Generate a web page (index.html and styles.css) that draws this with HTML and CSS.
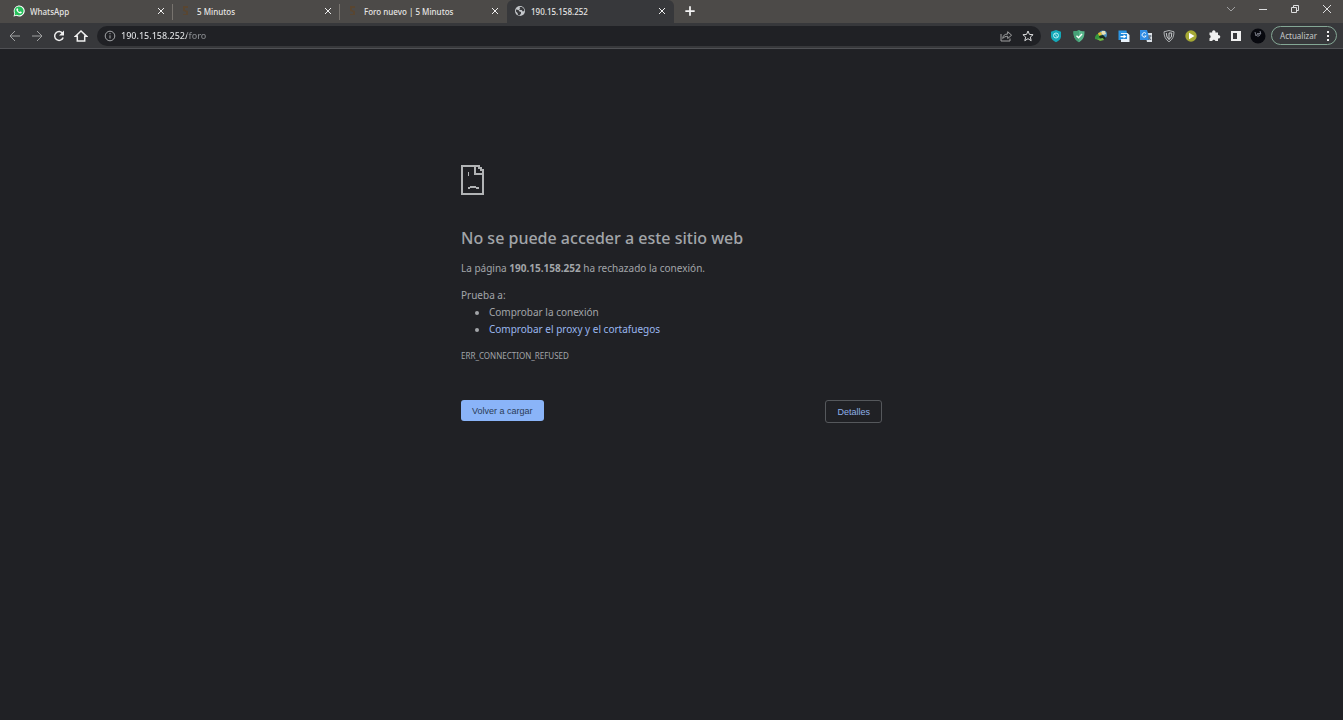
FILE: index.html
```html
<!DOCTYPE html>
<html lang="es">
<head>
<meta charset="utf-8">
<title>190.15.158.252</title>
<link rel="stylesheet" href="styles.css">
</head>
<body>
<header class="browser">
  <div class="tabstrip">
    <nav class="tabs" aria-label="Pestañas">
      <div class="tab">
        <svg class="favicon" viewBox="0 0 24 24"><path fill="#fff" d="M1 23l1.700-6A11 11 0 1 1 7 21.500z"/><path fill="#25c05a" d="M3.200 20.800l1.200-4.300a9 9 0 1 1 3.300 3.200z"/><path fill="#fff" d="M9 6.500c.6 0 1.500 2.200 1.500 2.700s-1 1.200-.8 1.600c.8 1.500 2 2.600 3.700 3.300.5.200 1.100-1.200 1.600-1.100.6.100 2.600 1 2.600 1.600 0 1.600-1.500 2.400-2.900 2.300-3.800-.5-7.600-4-8-7.300C6.600 8 7.800 6.500 9 6.500z"/></svg>
        <span class="tab-title">WhatsApp</span>
        <button class="tab-close" aria-label="Cerrar"><svg viewBox="0 0 10 10"><path d="M2 2l6 6M8 2l-6 6"/></svg></button>
      </div>
      <div class="tab">
        <svg class="favicon" viewBox="0 0 12 12"><path fill="#594631" d="M3 1h5v2H5v2l3 1v4H3V9h3V7L3 6z"/></svg>
        <span class="tab-title">5 Minutos</span>
        <button class="tab-close" aria-label="Cerrar"><svg viewBox="0 0 10 10"><path d="M2 2l6 6M8 2l-6 6"/></svg></button>
      </div>
      <div class="tab">
        <svg class="favicon" viewBox="0 0 12 12"><path fill="#594631" d="M3 1h5v2H5v2l3 1v4H3V9h3V7L3 6z"/></svg>
        <span class="tab-title">Foro nuevo | 5 Minutos</span>
        <button class="tab-close" aria-label="Cerrar"><svg viewBox="0 0 10 10"><path d="M2 2l6 6M8 2l-6 6"/></svg></button>
      </div>
      <div class="tab tab-active">
        <svg class="favicon" viewBox="0 0 24 24"><circle cx="12" cy="12" r="10" fill="#c4c7cb"/><path fill="#393a3d" d="M4 9l5 1 2 3 3 1v3l-3 4-3-1-1-4-3-3zM11 4l5 0 4 4 .5 4-3 1-2-3-4 0-1-2 2-1z"/></svg>
        <span class="tab-title">190.15.158.252</span>
        <button class="tab-close" aria-label="Cerrar"><svg viewBox="0 0 10 10"><path d="M2 2l6 6M8 2l-6 6"/></svg></button>
      </div>
    </nav>
    <button class="new-tab" aria-label="Nueva pestaña"><svg viewBox="0 0 12 12"><path d="M6 2v8M2 6h8"/></svg></button>
    <div class="window-controls">
      <button aria-label="Buscar pestañas"><svg class="dim" viewBox="0 0 12 12"><path d="M2 4l4 4 4-4"/></svg></button>
      <button aria-label="Minimizar"><svg viewBox="0 0 12 12"><path d="M2 6.500h8"/></svg></button>
      <button aria-label="Restaurar"><svg viewBox="0 0 12 12"><path d="M2.500 4.500h5v5h-5zM4.500 4V2.500h5v5H8"/></svg></button>
      <button aria-label="Cerrar ventana"><svg viewBox="0 0 12 12"><path d="M2 2l8 8M10 2l-8 8"/></svg></button>
    </div>
  </div>
  <div class="toolbar">
    <div class="nav-buttons">
      <button aria-label="Atrás"><svg class="dim" viewBox="0 0 14 14"><path d="M12 7H2.500M7 2L2 7l5 5"/></svg></button>
      <button aria-label="Adelante"><svg class="dim" viewBox="0 0 14 14"><path d="M2 7h9.500M7 2l5 5-5 5"/></svg></button>
      <button aria-label="Recargar"><svg class="strong" viewBox="0 0 14 14"><path d="M10.700 4.500A4.400 4.400 0 1 0 11.200 8.500"/><path class="solid" d="M12 1.500v5H7z"/></svg></button>
      <button aria-label="Inicio"><svg class="strong" viewBox="0 0 14 14"><path d="M1.500 7.200L7 2l5.500 5.200H10.700V12H3.300V7.200z"/></svg></button>
    </div>
    <div class="omnibox">
      <svg class="info" viewBox="0 0 14 14"><circle cx="7" cy="7" r="4.800"/><path d="M7 6.300v3.200M7 4v1.200"/></svg>
      <input class="address" type="text" value="190.15.158.252/foro" aria-label="Dirección" spellcheck="false">
      <button aria-label="Compartir"><svg class="dim" viewBox="0 0 14 14"><path d="M2 5v7h9v-2.500M3.700 9.500c.3-3 2-4.500 5-4.500V2.700L12.600 6.200 8.700 9.500V7.300C6.500 7.300 5 8 3.700 9.500z"/></svg></button>
      <button aria-label="Añadir a marcadores"><svg viewBox="0 0 14 14"><path d="M7 2l1.400 3.400 3.700.3-2.800 2.400.9 3.600L7 9.700l-3.200 2 .9-3.600-2.800-2.400 3.700-.3z"/></svg></button>
    </div>
    <div class="extensions">
      <button aria-label="Escudo"><svg viewBox="0 0 14 14"><path fill="#14a8b8" stroke="none" d="M7 1l5 1.700v4.500c0 2.800-2 4.600-5 6-3-1.400-5-3.200-5-6V2.700z"/><circle cx="7" cy="6.500" r="2.500" stroke="#b4eef2"/><path stroke="#b4eef2" d="M5.500 5l3 3"/></svg></button>
      <button aria-label="Protección"><svg viewBox="0 0 14 14"><path fill="#58b58a" stroke="none" d="M7 1c2 1.200 3.500 1.400 5.500 1.300C12.600 8 11 11 7 13.300 3 11 1.400 8 1.500 2.300 3.500 2.400 5 2.200 7 1z"/><path fill="#46a077" stroke="none" d="M7 1C5 2.200 3.500 2.400 1.500 2.300 1.400 8 3 11 7 13.300z"/><path stroke="#fff" stroke-width="1.400" d="M4.500 6.700l2 2L10 5"/></svg></button>
      <button aria-label="Gestor de descargas"><svg viewBox="0 0 14 14"><g stroke="none"><circle cx="9" cy="5.500" r="4" fill="#4a8fbd"/><path fill="#e8e3b8" d="M8 2l3 0 1 3-3 1-2-2z"/><path fill="#35963d" d="M1 8c1-3 3-4 6-3l1 3-3 3-4-1z"/><path fill="#e4bf37" d="M4 4l3-1 1 3-3 1z"/><path fill="#172c1b" d="M5 7l4-1 3 3-3 2-3-1z"/><path fill="#6fb544" d="M3 10l6-1 1 2-4 1z"/></g></svg></button>
      <button aria-label="Transferir"><svg viewBox="0 0 14 14"><g stroke="none"><path fill="#2d96e4" d="M1.500 1.500h8L11 11H1.500z"/><path fill="#e9f2fa" d="M4 4h6.500l2 2v7H4z"/><path fill="#2389d9" d="M3 5h7v5H3z"/><path fill="#fff" d="M3.500 7h3V5.500L9.500 7.500l-3 2V8.300h-3z"/></g></svg></button>
      <button aria-label="Traductor"><svg viewBox="0 0 14 14"><g stroke="none"><path fill="#dde2e7" d="M6 4h7v9H8z"/><path fill="#318de5" d="M1 1h7l3 10H1z"/></g><path stroke="#eef5ff" d="M7 4.500A2.200 2.200 0 1 0 7.200 7H5.500"/><path stroke="#5c6876" d="M9 7h3.500M11 6v1c0 2-1 3-2 3.500M9.700 8l2.300 3"/></svg></button>
      <button aria-label="Privacidad"><svg viewBox="0 0 14 14"><path stroke="#aeb1b3" d="M7 1.500l5 1.300c0 4.700-1.500 7.700-5 10-3.500-2.300-5-5.300-5-10z"/><path stroke="#c8cbcd" d="M4.300 4l.7 4 2 2.500M7 4v6.500L9.300 8l.5-4H7"/></svg></button>
      <button aria-label="Reproductor"><svg viewBox="0 0 14 14"><circle cx="7" cy="7" r="5.700" fill="#a5a834" stroke="none"/><path fill="#fff" stroke="none" d="M5 3.700L10.500 7 5 10.300z"/></svg></button>
      <button aria-label="Extensiones"><svg viewBox="0 0 14 14"><path class="solid" d="M2.500 3.500h2.700a1.700 1.700 0 1 1 3.200 0H11v2.700a1.700 1.700 0 1 1 0 3.200V12H8.400a1.700 1.700 0 0 0-3.200 0H2.500V9.300a1.700 1.700 0 0 0 0-3.200z"/></svg></button>
      <button aria-label="Panel lateral"><svg viewBox="0 0 14 14"><path class="solid" fill-rule="evenodd" d="M2 2h10v10H2zM4 4v6h4V4z"/></svg></button>
    </div>
    <button class="avatar" aria-label="Perfil"><svg viewBox="0 0 16 16"><circle cx="8" cy="8" r="7.500" fill="#08090f" stroke="none"/><path stroke="#777a85" d="M5 4l1 4 2-3 0 4M8 6l3-1-2 3M10 3l.5 2"/></svg></button>
    <button class="update">Actualizar<svg viewBox="0 0 4 12"><path class="solid" d="M1 1h2v2H1zM1 5h2v2H1zM1 9h2v2H1z"/></svg></button>
  </div>
</header>
<main class="error-page">
  <svg class="sad-page" viewBox="0 0 24 30" shape-rendering="crispEdges"><path fill="#b2b4b6" d="M0 0h19v2h2v2h2v26H0zM2 2v26h19V10h-8V2zM15 2v6h6V6h-2V4h-2V2zM7 7h1v4H7zM9 21h6v2H9zM7 22h2v2H7zM15 22h3v2h-3z"/></svg>
  <h1>No se puede acceder a este sitio web</h1>
  <p class="summary">La página <strong>190.15.158.252</strong> ha rechazado la conexión.</p>
  <div class="suggestions">
    <p>Prueba a:</p>
    <ul>
      <li>Comprobar la conexión</li>
      <li><a href="#proxy">Comprobar el proxy y el cortafuegos</a></li>
    </ul>
  </div>
  <p class="error-code">ERR_CONNECTION_REFUSED</p>
  <div class="actions">
    <button class="reload">Volver a cargar</button>
    <button class="details">Detalles</button>
  </div>
</main>
</body>
</html>
```
FILE: styles.css
```css
* { box-sizing: border-box; }

body {
  margin: 0;
  min-height: 100vh;
  background: #202125;
  color: #a2a5a9;
  font-family: "Noto Sans", "Open Sans", sans-serif;
  font-size: 10px;
}

button {
  display: flex;
  align-items: center;
  justify-content: center;
  margin: 0;
  padding: 0;
  border: 0;
  background: none;
  color: inherit;
  font: inherit;
}

h1, p, ul { margin: 0; }

.browser svg {
  display: block;
  flex: none;
  width: 14px;
  height: 14px;
  fill: none;
  stroke: #dddedf;
  stroke-width: 1;
}

.browser svg.dim { stroke: #a0a1a2; }
.browser svg.strong { stroke: #f0f0f0; stroke-width: 1.5; }
.browser .solid { fill: #f0f0f0; stroke: none; }

.tabstrip {
  display: flex;
  height: 23px;
  padding-left: 6px;
  background: #4c4a48;
}

.tabs { display: flex; }

.tab {
  display: flex;
  align-items: center;
  gap: 5px;
  width: 167px;
  padding: 0 7px 1px;
  background: linear-gradient(#77736e, #77736e) right center / 1px 16px no-repeat;
  color: #e6e5e3;
  font-size: 8px;
  font-weight: 500;
}

.tab:nth-child(3) { background: none; }

.tab-active {
  background: #37383b;
  border-radius: 6px 6px 0 0;
}

.browser .favicon {
  width: 12px;
  height: 12px;
  stroke: none;
}

.tab-title {
  flex: 1;
  overflow: hidden;
  white-space: nowrap;
}

.browser .tab-close svg {
  width: 10px;
  height: 10px;
  stroke: #f0f0f0;
}

.new-tab {
  margin-left: 9px;
  padding-bottom: 1px;
}

.browser .new-tab svg { stroke: #f4f4f4; stroke-width: 1.5; }

.window-controls {
  display: flex;
  margin-left: auto;
}

.window-controls button {
  width: 32px;
  height: 18px;
}

.browser .window-controls svg {
  width: 12px;
  height: 12px;
}

.toolbar {
  display: flex;
  align-items: center;
  height: 26px;
  padding: 0 6px 0 8px;
  border-bottom: 1px solid #505155;
  background: #37383b;
}

.nav-buttons { display: flex; gap: 8px; }

.omnibox {
  display: flex;
  flex: 1;
  align-items: center;
  gap: 8px;
  height: 20px;
  margin-left: 9px;
  padding: 0 6px;
  border-radius: 10px;
  background: #202125;
}

.browser .info { stroke: #a5a7aa; }

.address {
  flex: 1;
  min-width: 0;
  height: 18px;
  margin-left: -4px;
  padding: 0;
  border: 0;
  outline: 0;
  background: linear-gradient(90deg, #e6e8ea 66px, #888b8f 66px);
  background-clip: text;
  color: #dfe1e3;
  -webkit-text-fill-color: transparent;
  font: inherit;
  font-size: 9px;
  font-weight: 500;
}

.extensions {
  display: flex;
  justify-content: space-between;
  width: 194px;
  margin-left: 8px;
}

.avatar { margin-left: 7px; }
.browser .avatar svg { width: 16px; height: 16px; }

.update {
  gap: 9px;
  height: 19px;
  margin-left: 5px;
  padding: 0 6px 0 8px;
  border: 1px solid #84a795;
  border-radius: 10px;
  color: #c5c8c8;
  font-size: 8px;
}

.browser .update svg { width: 4px; height: 12px; }

.error-page {
  width: 421px;
  max-width: 100%;
  margin: 0 auto;
  padding-top: 116px;
}

.sad-page {
  display: block;
  width: 24px;
  height: 30px;
  margin-bottom: 31px;
}

h1 {
  font-size: 16px;
  font-weight: 500;
  line-height: 24px;
  white-space: nowrap;
}

.summary {
  margin-top: 10px;
  line-height: 17px;
}

.suggestions {
  margin-top: 10px;
  line-height: 17px;
}

.suggestions ul { padding-left: 28px; }
.suggestions a { color: #9ab7ef; text-decoration: none; }

.error-code {
  margin-top: 9px;
  font-size: 8px;
  line-height: 17px;
}

.actions {
  display: flex;
  align-items: flex-start;
  justify-content: space-between;
  margin-top: 36px;
}

.reload, .details {
  border-radius: 3px;
  font-family: "Liberation Sans", Arial, sans-serif;
  font-size: 9px;
}

.reload {
  height: 21px;
  padding: 0 11px;
  background: #8ab4f8;
  color: #2a3b54;
}

.details {
  height: 23px;
  padding: 0 11px;
  border: 1px solid #55585c;
  color: #8fb0e8;
}
```
